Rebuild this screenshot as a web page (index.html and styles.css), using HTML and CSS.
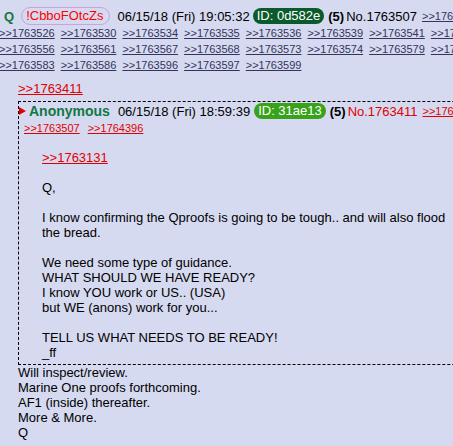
FILE: index.html
```html
<!DOCTYPE html>
<html>
<head>
<meta charset="utf-8">
<link rel="stylesheet" href="styles.css">
</head>
<body>
<div class="thread">
  <div class="intro op-intro">
    <span class="name">Q</span>
    <span class="trip">!CbboFOtcZs</span>
    <span class="date">06/15/18 (Fri) 19:05:32</span>
    <span class="pid pid-dark">ID: 0d582e</span>
    <span class="count">(5)</span>
    <span class="no">No.1763507</span>
    <a class="ref">&gt;&gt;1763516</a>
  </div>
  <div class="replies">
    <a>&gt;&gt;1763526</a><a>&gt;&gt;1763530</a><a>&gt;&gt;1763534</a><a>&gt;&gt;1763535</a><a>&gt;&gt;1763536</a><a>&gt;&gt;1763539</a><a>&gt;&gt;1763541</a><a>&gt;&gt;1763545</a><a>&gt;&gt;1763550</a>
    <a>&gt;&gt;1763556</a><a>&gt;&gt;1763561</a><a>&gt;&gt;1763567</a><a>&gt;&gt;1763568</a><a>&gt;&gt;1763573</a><a>&gt;&gt;1763574</a><a>&gt;&gt;1763579</a><a>&gt;&gt;1763580</a><a>&gt;&gt;1763582</a>
    <a>&gt;&gt;1763583</a><a>&gt;&gt;1763586</a><a>&gt;&gt;1763596</a><a>&gt;&gt;1763597</a><a>&gt;&gt;1763599</a>
  </div>
  <div class="body">
    <div class="quote-line"><a class="quote">&gt;&gt;1763411</a></div>
    <div class="inline-post">
      <div class="intro sub-intro">
        <span class="tri"></span>
        <span class="name anon">Anonymous</span>
        <span class="date">06/15/18 (Fri) 18:59:39</span>
        <span class="pid pid-light">ID: 31ae13</span>
        <span class="count">(5)</span>
        <span class="no red">No.1763411</span>
        <a class="ref red">&gt;&gt;1763507</a>
      </div>
      <div class="sub-replies">
        <a>&gt;&gt;1763507</a><a>&gt;&gt;1764396</a>
      </div>
      <div class="sub-body">
        <a class="quote">&gt;&gt;1763131</a><br>
        <br>
        Q,<br>
        <br>
        I know confirming the Qproofs is going to be tough.. and will also flood the bread.<br>
        <br>
        We need some type of guidance.<br>
        WHAT SHOULD WE HAVE READY?<br>
        I know YOU work or US.. (USA)<br>
        but WE (anons) work for you...<br>
        <br>
        TELL US WHAT NEEDS TO BE READY!<br>
        _ff
      </div>
    </div>
    <div class="reply-text">
      Will inspect/review.<br>
      Marine One proofs forthcoming.<br>
      AF1 (inside) thereafter.<br>
      More &amp; More.<br>
      Q
    </div>
  </div>
</div>
</body>
</html>
```

FILE: styles.css
```css
html, body {
  margin: 0;
  padding: 0;
  overflow: hidden;
}
body {
  background: #d6daf0;
  color: #000;
  font-family: "Liberation Sans", Arial, sans-serif;
  font-size: 13px;
  width: 453px;
  height: 446px;
}
.thread {
  width: 640px;
}
.intro {
  display: flex;
  align-items: center;
  height: 18px;
  white-space: nowrap;
}
.op-intro {
  margin-top: 7px;
  padding-left: 4px;
}
.name {
  color: #117743;
  font-weight: bold;
}
.anon {
  font-size: 14px;
  margin-left: 3px;
}
.trip {
  color: #ff0000;
  border: 1px solid #c9a3d9;
  border-radius: 9px;
  height: 16px;
  line-height: 16px;
  padding: 0 6px 0 4px;
  margin-left: 7px;
}
.date {
  margin-left: 7px;
}
.pid {
  color: #fff;
  border-radius: 8px;
  height: 16px;
  line-height: 16px;
  padding: 0 4px;
  margin-left: 3px;
}
.pid-dark {
  background: #0b5a2b;
}
.pid-light {
  background: #38a31a;
}
.count {
  font-weight: bold;
  margin-left: 4px;
}
.no {
  margin-left: 2px;
}
.red {
  color: #e00000;
}
.ref {
  font-size: 11px;
  color: #34345c;
  text-decoration: underline;
  margin-left: 5px;
}
.ref.red {
  color: #e00000;
}
.replies {
  display: grid;
  grid-template-columns: repeat(9, 61.7px);
  margin-left: -1px;
  line-height: 16px;
  font-size: 11px;
}
.replies a {
  color: #34345c;
  text-decoration: underline;
  justify-self: start;
}
.body {
  padding-left: 18px;
  padding-top: 8px;
}
.quote-line {
  line-height: 16px;
  margin-bottom: 4px;
}
.quote {
  color: #e00000;
  text-decoration: underline;
}
.inline-post {
  border: 1px dashed #000;
  width: 600px;
  padding-bottom: 4px;
}
.tri {
  width: 0;
  height: 0;
  border-top: 4px solid transparent;
  border-bottom: 4px solid transparent;
  border-left: 7px solid #e00000;
}
.sub-intro .date {
  margin-left: 8px;
}
.sub-intro .pid {
  margin-left: 4px;
}
.sub-replies {
  display: flex;
  gap: 8px;
  padding-left: 5px;
  line-height: 16px;
  font-size: 11px;
}
.sub-replies a {
  color: #e00000;
  text-decoration: underline;
}
.sub-body {
  margin-top: 14px;
  padding-left: 23px;
  width: 412px;
  line-height: 15px;
}
.reply-text {
  line-height: 15px;
}
```
